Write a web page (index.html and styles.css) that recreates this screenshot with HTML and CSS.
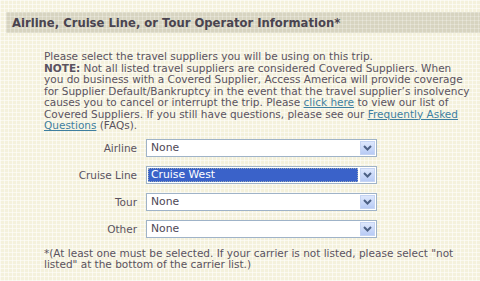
FILE: index.html
```html
<!DOCTYPE html>
<html>
<head>
<meta charset="utf-8">
<link rel="stylesheet" href="styles.css">
</head>
<body>
<div class="header">Airline, Cruise Line, or Tour Operator Information*</div>
<div class="content">
  <p class="intro">Please select the travel suppliers you will be using on this trip.<br><b>NOTE:</b> Not all listed travel suppliers are considered Covered Suppliers. When<br>you do business with a Covered Supplier, Access America will provide coverage<br>for Supplier Default/Bankruptcy in the event that the travel supplier’s insolvency<br>causes you to cancel or interrupt the trip. Please <a href="#">click here</a> to view our list of<br>Covered Suppliers. If you still have questions, please see our <a href="#">Frequently Asked<br>Questions</a> (FAQs).</p>
  <div class="fields">
    <label class="lbl">Airline</label>
    <div class="select"><span class="val">None</span><span class="btn"><svg width="9" height="6" viewBox="0 0 9 6"><path d="M1 1 L4.5 4.5 L8 1" fill="none" stroke="#4d6185" stroke-width="2"/></svg></span></div>
    <label class="lbl">Cruise Line</label>
    <div class="select"><span class="val sel">Cruise West</span><span class="btn"><svg width="9" height="6" viewBox="0 0 9 6"><path d="M1 1 L4.5 4.5 L8 1" fill="none" stroke="#4d6185" stroke-width="2"/></svg></span></div>
    <label class="lbl">Tour</label>
    <div class="select"><span class="val">None</span><span class="btn"><svg width="9" height="6" viewBox="0 0 9 6"><path d="M1 1 L4.5 4.5 L8 1" fill="none" stroke="#4d6185" stroke-width="2"/></svg></span></div>
    <label class="lbl">Other</label>
    <div class="select"><span class="val">None</span><span class="btn"><svg width="9" height="6" viewBox="0 0 9 6"><path d="M1 1 L4.5 4.5 L8 1" fill="none" stroke="#4d6185" stroke-width="2"/></svg></span></div>
  </div>
  <p class="note">*(At least one must be selected. If your carrier is not listed, please select "not<br>listed" at the bottom of the carrier list.)</p>
</div>
</body>
</html>
```

FILE: styles.css
```css
html, body {
  margin: 0;
  padding: 0;
}
body {
  width: 480px;
  height: 281px;
  overflow: hidden;
  background-color: #f4f1dc;
  background-image:
    repeating-linear-gradient(90deg, rgba(255,255,255,0.55) 0 1px, transparent 1px 4px),
    repeating-linear-gradient(0deg, rgba(255,255,255,0.55) 0 1px, transparent 1px 4px);
  font-family: "DejaVu Sans", Verdana, sans-serif;
  color: #5a5360;
  padding-top: 12px;
  box-sizing: border-box;
}
.header {
  margin-left: 6px;
  height: 21px;
  line-height: 22px;
  padding-left: 6px;
  background-color: #d7d4c0;
  background-image:
    repeating-linear-gradient(90deg, rgba(255,255,255,0.25) 0 1px, transparent 1px 4px),
    repeating-linear-gradient(0deg, rgba(255,255,255,0.25) 0 1px, transparent 1px 4px);
  font-weight: bold;
  font-size: 11.6px;
  color: #4a4450;
  white-space: nowrap;
}
.content {
  padding: 0 0 0 44px;
}
.intro {
  margin: 18px 0 0;
  font-size: 10.5px;
  line-height: 11.5px;
  white-space: nowrap;
}
.intro a {
  color: #3f7f9f;
}
.fields {
  display: grid;
  grid-template-columns: 93px 231px;
  column-gap: 9px;
  row-gap: 9px;
  margin-top: 7px;
  align-items: center;
}
.lbl {
  text-align: right;
  font-size: 10.5px;
}
.select {
  display: flex;
  height: 18px;
  box-sizing: border-box;
  border: 1px solid #9fb3c8;
  background: #fff;
  padding: 1px;
}
.val {
  flex: 1;
  font-size: 10.8px;
  line-height: 14px;
  padding-left: 3px;
  color: #4e4855;
}
.val.sel {
  background: #3a62c9;
  color: #fff;
  outline: 1px dotted #9ab;
  outline-offset: -1px;
  margin-right: 2px;
}
.btn {
  width: 15px;
  height: 14px;
  box-sizing: border-box;
  background: linear-gradient(#dde7fc, #b8cbf5);
  border: 1px solid #c5d4f3;
  display: flex;
  align-items: center;
  justify-content: center;
}
.note {
  margin: 10px 0 0;
  font-size: 10.5px;
  line-height: 11.5px;
  white-space: nowrap;
}
```
